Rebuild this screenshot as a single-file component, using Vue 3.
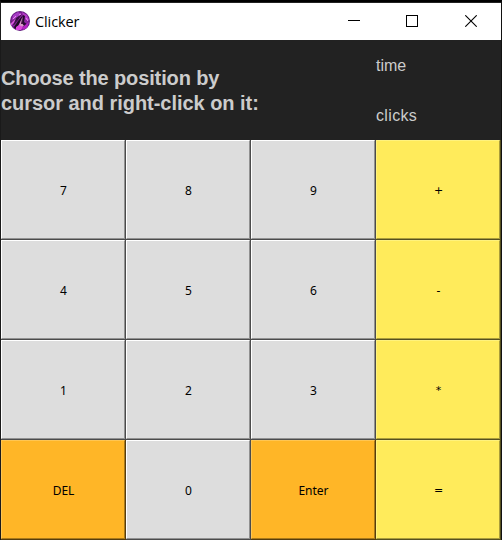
<script setup>
const keys = [
  { label: '7' }, { label: '8' }, { label: '9' }, { label: '+', tone: 'yellow', symbol: true },
  { label: '4' }, { label: '5' }, { label: '6' }, { label: '-', tone: 'yellow' },
  { label: '1' }, { label: '2' }, { label: '3' }, { label: '*', tone: 'yellow', symbol: true },
  { label: 'DEL', tone: 'orange' }, { label: '0' }, { label: 'Enter', tone: 'orange' }, { label: '=', tone: 'yellow', symbol: true },
]
</script>

<template>
  <div class="window">
    <header class="titlebar">
      <svg class="logo" width="20" height="20" viewBox="0 0 20 20">
        <defs>
          <radialGradient id="orb" cx="50%" cy="50%" r="50%">
            <stop offset="0" stop-color="#8a2a9c" />
            <stop offset="0.75" stop-color="#8a22a0" />
            <stop offset="1" stop-color="#5a1478" />
          </radialGradient>
          <clipPath id="disc"><circle cx="10" cy="10" r="10" /></clipPath>
        </defs>
        <g clip-path="url(#disc)">
          <rect width="20" height="20" fill="url(#orb)" />
          <path d="M3 4L8 1L11 3L6 7L2 9Z" fill="#a53cc4" />
          <path d="M12 1L17 4L19 9L16 9L13 4Z" fill="#b43cc6" />
          <path d="M0 12L6 7L12 3L8 9L4 14Z" fill="#3a1146" />
          <path d="M1 12L6 7L4 12L1 15Z" fill="#d44fdc" />
          <path d="M4 16L8 10L13 4L11 9L8 15L5 18Z" fill="#1c0a22" />
          <path d="M13 4L15 5L14 11L18 14L14 16L11 13Z" fill="#270a30" />
          <path d="M9 14L12.5 6L12 12L14 15L9 17Z" fill="#d89ac8" />
          <path d="M6 16L9 14L13 16L11 19L6 19Z" fill="#dc42de" />
          <path d="M15 14L19 11L17 17L13 19L12 17Z" fill="#b422c4" />
          <path d="M11 13L12 8L13 13Z" fill="#3d0c3c" />
          <path d="M3 8L6 5M16 7L18 10M9 4L11 3" stroke="#ee86f2" stroke-width="1" />
        </g>
      </svg>
      <span class="title">Clicker</span>
      <div class="controls">
        <svg width="12" height="12" viewBox="0 0 12 12" shape-rendering="crispEdges"><path d="M0 5.5H12" stroke="#000" /></svg>
        <svg width="12" height="12" viewBox="0 0 12 12" shape-rendering="crispEdges"><rect x=".5" y=".5" width="11" height="11" fill="none" stroke="#000" /></svg>
        <svg class="close" width="12" height="12" viewBox="0 0 12 12"><path d="M.3 .3L11.7 11.7M11.7 .3L.3 11.7" stroke="#000" stroke-width="1.1" /></svg>
      </div>
    </header>
    <section class="display">
      <div class="prompt"><span class="first">Choose the position by</span><br>cursor and right-click on it:</div>
      <div class="stats">
        <span>time</span>
        <span class="clicks">clicks</span>
      </div>
    </section>
    <main class="pad">
      <button v-for="key in keys" :key="key.label" class="key" :class="[key.tone, { symbol: key.symbol }]">
        <span class="face">{{ key.label }}</span>
      </button>
    </main>
  </div>
</template>

<style>
body { overflow: hidden; background: #111; }
</style>

<style scoped>
.window {
  box-sizing: border-box;
  width: 502px;
  height: 540px;
  border-top: 2px solid #000;
  border-left: 1px solid #1a1a1a;
  border-right: 1px solid #111;
  background: #222;
}
.titlebar {
  box-sizing: border-box;
  display: flex;
  align-items: center;
  height: 38px;
  padding: 0 24px 0 9px;
  border-top: 1px solid #222;
  background: #fff;
}
.logo { display: block; margin-top: -1px; }
.title {
  margin-left: 5px;
  font: 14.5px/20px "Open Sans", "Noto Sans", sans-serif;
  letter-spacing: -0.1px;
  color: #000;
}
.controls { display: flex; gap: 46px; margin-left: auto; }
.controls svg { display: block; margin-top: -1px; }
.controls .close { margin-left: 1px; }
.display {
  display: grid;
  grid-template-columns: 375px 125px;
  height: 100px;
  color: #ccc;
  font-family: "Liberation Sans", Arial, sans-serif;
}
.prompt {
  align-self: center;
  padding-top: 2px;
  font-size: 20px;
  font-weight: bold;
  line-height: 25px;
  letter-spacing: -0.04px;
  white-space: nowrap;
}
.first { letter-spacing: -0.13px; }
.stats { display: grid; grid-template-rows: 50px 50px; font-size: 16px; line-height: 52px; }
.clicks { letter-spacing: 0.35px; }
.pad { display: grid; grid-template: repeat(4, 100px) / repeat(4, 125px); }
.key {
  display: flex;
  box-sizing: border-box;
  margin: 0;
  padding: 0;
  border: 0 solid #4b4b4b;
  border-width: 0 1px 1px 0;
  border-radius: 0;
  background: #ddd;
  color: #000;
  font: 12px/16px "Noto Sans", sans-serif;
}
.face {
  display: flex;
  flex: 1;
  align-self: stretch;
  align-items: center;
  justify-content: center;
  padding: 2px 0 0 1px;
  border: 1px solid;
  border-color: #fff #919191 #919191 #fff;
}
.symbol { font: 11px/16px "DejaVu Sans", sans-serif; }
.yellow { background: #ffeb5b; border-color: #56501f; }
.yellow .face { border-color: #fff27e #a99c3c #a99c3c #fff27e; }
.orange { background: #ffb627; border-color: #563d0d; }
.orange .face { border-color: #ffc653 #a9791a #a9791a #ffc653; }
</style>
